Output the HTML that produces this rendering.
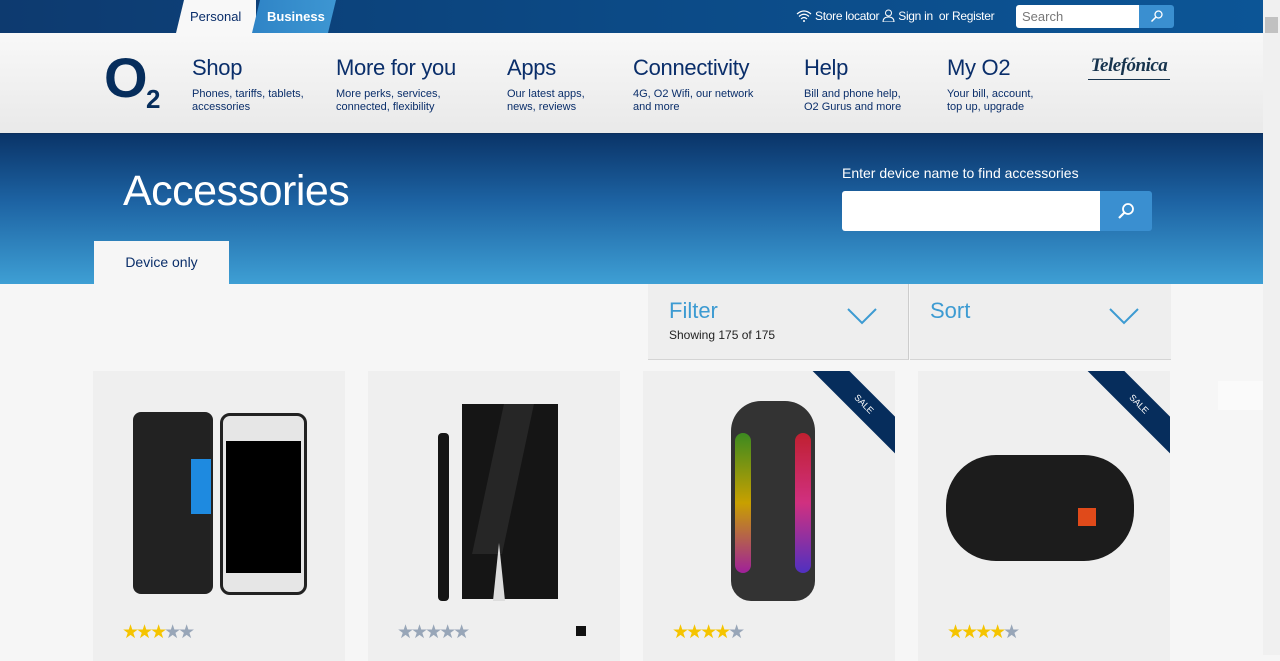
<!DOCTYPE html>
<html><head><meta charset="utf-8"><style>
*{margin:0;padding:0;box-sizing:border-box}
body{width:1280px;height:655px;overflow:hidden;background:#f6f6f6;font-family:"Liberation Sans",sans-serif;position:relative}
.a{position:absolute}
.top{left:0;top:0;width:1263px;height:33px;background:linear-gradient(90deg,#0d3a6f,#0c4a86 50%,#0c5596)}
.nav{left:0;top:33px;width:1263px;height:101px;background:linear-gradient(#f8f8f8,#e9e9e9);border-bottom:1px solid #0c2f5c}
.hero{left:0;top:134px;width:1263px;height:150px;background:linear-gradient(#0a3468,#1d63a3 45%,#3e9fd4)}
.ni h3{font-size:22px;color:#0a2e6a;font-family:"Liberation Sans",sans-serif;font-weight:normal;letter-spacing:-0.3px}
.ni p{font-size:11px;color:#0a2e6a;line-height:13px;margin-top:7px}
.card{top:371px;width:252px;height:290px;background:#efefef;overflow:hidden}
.st{top:621px;font-size:19px;letter-spacing:-3px}
.y{color:#f5c400}.g{color:#98a6b8}
.sale{width:150px;height:26px;background:#062d5c;transform:rotate(45deg);color:#fff;font-size:9px;text-align:center;line-height:26px}
</style></head><body>
<div class="a top"></div>
<div class="a" style="left:176px;top:0;width:80px;height:33px;background:#f8f8f8;clip-path:polygon(8px 0,100% 0,100% 100%,0 100%)"></div>
<div class="a" style="left:190px;top:9px;font-size:13px;color:#0a2e6a">Personal</div>
<div class="a" style="left:252px;top:0;width:84px;height:33px;background:linear-gradient(90deg,#2f84c6,#3d96d2);clip-path:polygon(8px 0,100% 0,calc(100% - 8px) 100%,0 100%)"></div>
<div class="a" style="left:267px;top:9px;font-size:13px;color:#fff;font-weight:bold">Business</div>
<div class="a" style="left:796px;top:9px;font-size:12px;color:#fff;white-space:nowrap;letter-spacing:-0.3px">
<svg width="16" height="12" viewBox="0 0 16 12" style="vertical-align:-2px"><path d="M1 4Q8-2 15 4M3 6.5Q8 2 13 6.5M5 9Q8 6 11 9" stroke="#fff" fill="none" stroke-width="1.2"/><circle cx="8" cy="11" r="1" fill="#fff"/></svg> Store locator
<svg width="13" height="13" viewBox="0 0 13 13" style="vertical-align:-2px"><circle cx="6.5" cy="4" r="3" stroke="#fff" fill="none"/><path d="M1 13Q1 8 6.5 8Q12 8 12 13Z" stroke="#fff" fill="none"/></svg> Sign in &nbsp;or Register</div>
<div class="a" style="left:1016px;top:5px;width:123px;height:23px;background:#fff;border-radius:3px 0 0 3px;font-size:13px;color:#777;padding:4px 6px">Search</div>
<div class="a" style="left:1139px;top:5px;width:35px;height:23px;background:#3a8fd0;border-radius:0 3px 3px 0"><svg width="35" height="23"><circle cx="19.5" cy="9.5" r="3.5" stroke="#fff" fill="none" stroke-width="1.3"/><path d="M17 12L12.5 16.5" stroke="#fff" stroke-width="1.5"/></svg></div>
<div class="a nav"></div>
<div class="a" style="left:104px;top:50px;font-size:56px;font-weight:bold;color:#062d5c;line-height:56px;letter-spacing:-2px">O</div>
<div class="a" style="left:146px;top:84px;font-size:26px;font-weight:bold;color:#062d5c">2</div>
<div class="a ni" style="left:192px;top:55px"><h3>Shop</h3><p>Phones, tariffs, tablets,<br>accessories</p></div>
<div class="a ni" style="left:336px;top:55px"><h3>More for you</h3><p>More perks, services,<br>connected, flexibility</p></div>
<div class="a ni" style="left:507px;top:55px"><h3>Apps</h3><p>Our latest apps,<br>news, reviews</p></div>
<div class="a ni" style="left:633px;top:55px"><h3>Connectivity</h3><p>4G, O2 Wifi, our network<br>and more</p></div>
<div class="a ni" style="left:804px;top:55px"><h3>Help</h3><p>Bill and phone help,<br>O2 Gurus and more</p></div>
<div class="a ni" style="left:947px;top:55px"><h3>My O2</h3><p>Your bill, account,<br>top up, upgrade</p></div>
<div class="a" style="left:1088px;top:55px;font-size:19px;font-style:italic;font-weight:bold;font-family:'Liberation Serif';color:#17344e;border-bottom:1px solid #17344e;padding-bottom:2px;width:82px;text-align:center;letter-spacing:-0.5px">Telefónica</div>
<div class="a hero"></div>
<div class="a" style="left:123px;top:167px;font-size:43px;color:#fff;font-family:'Liberation Sans';letter-spacing:-0.5px">Accessories</div>
<div class="a" style="left:842px;top:165px;font-size:14px;color:#fff">Enter device name to find accessories</div>
<div class="a" style="left:842px;top:191px;width:258px;height:40px;background:#fff;border-radius:3px 0 0 3px"></div>
<div class="a" style="left:1100px;top:191px;width:52px;height:40px;background:#3a8fd0;border-radius:0 3px 3px 0"><svg width="52" height="40"><circle cx="28" cy="18" r="5" stroke="#fff" fill="none" stroke-width="1.8"/><path d="M24.5 21.5L19 27" stroke="#fff" stroke-width="2.2"/></svg></div>
<div class="a" style="left:94px;top:241px;width:135px;height:43px;background:#f6f6f6;font-size:14px;color:#0a2e6a;text-align:center;line-height:43px">Device only</div>
<div class="a" style="left:648px;top:284px;width:261px;height:76px;background:#eee;border-bottom:1px solid #d4d4d4;border-right:1px solid #ccc"></div>
<div class="a" style="left:910px;top:284px;width:261px;height:76px;background:#eee;border-bottom:1px solid #d4d4d4"></div>
<div class="a" style="left:669px;top:298px;font-size:22px;color:#3d9bd2">Filter</div>
<div class="a" style="left:669px;top:328px;font-size:12px;color:#222">Showing 175 of 175</div>
<div class="a" style="left:930px;top:298px;font-size:22px;color:#3d9bd2">Sort</div>
<svg class="a" style="left:846px;top:306px" width="32" height="20"><path d="M2 3L16 17L30 3" stroke="#3d9bd2" fill="none" stroke-width="2"/></svg>
<svg class="a" style="left:1108px;top:306px" width="32" height="20"><path d="M2 3L16 17L30 3" stroke="#3d9bd2" fill="none" stroke-width="2"/></svg>
<div class="a" style="left:1218px;top:381px;width:45px;height:29px;background:#fafafa"></div>
<div class="a" style="left:1263px;top:0;width:17px;height:655px;background:#f0f0f0"></div>
<div class="a" style="left:1265px;top:17px;width:13px;height:16px;background:#c1c1c1"></div>

<div class="a card" style="left:93px">
<div class="a" style="left:40px;top:41px;width:80px;height:182px;background:#222;border-radius:8px"></div>
<div class="a" style="left:98px;top:88px;width:20px;height:55px;background:#1e8ae0"></div>
<div class="a" style="left:127px;top:42px;width:87px;height:182px;background:#e6e6e6;border:3px solid #222;border-radius:10px"></div>
<div class="a" style="left:133px;top:70px;width:75px;height:132px;background:#000"></div>
</div>
<div class="card a" style="left:368px">
<div class="a" style="left:94px;top:33px;width:96px;height:195px;background:#151515"></div>
<div class="a" style="left:70px;top:62px;width:11px;height:168px;background:#151515;border-radius:4px"></div>
<div class="a" style="left:120px;top:33px;width:30px;height:150px;background:#262626;transform:skewX(-12deg)"></div>
<div class="a" style="left:125px;top:172px;width:0;height:0;border-left:6px solid transparent;border-right:6px solid transparent;border-bottom:58px solid #ddd"></div>
</div>
<div class="card a" style="left:643px">
<div class="a" style="left:88px;top:30px;width:84px;height:200px;background:#333;border-radius:30px 30px 20px 20px"></div>
<div class="a" style="left:92px;top:62px;width:16px;height:140px;background:linear-gradient(#3c8a20,#c8a000,#a0209a);border-radius:8px"></div>
<div class="a" style="left:152px;top:62px;width:16px;height:140px;background:linear-gradient(#c02030,#d03080,#5030c0);border-radius:8px"></div>
<div class="a sale" style="left:146px;top:20px">SALE</div>
</div>
<div class="card a" style="left:918px">
<div class="a" style="left:28px;top:84px;width:188px;height:106px;background:#1c1c1c;border-radius:50px"></div>
<div class="a" style="left:160px;top:137px;width:18px;height:18px;background:#e04a1a"></div>
<div class="a sale" style="left:146px;top:20px">SALE</div>
</div>
<div class="a st" style="left:122px"><span class="y">★★★</span><span class="g">★★</span></div>
<div class="a st" style="left:397px"><span class="g">★★★★★</span></div>
<div class="a" style="left:576px;top:626px;width:10px;height:10px;background:#111"></div>
<div class="a st" style="left:672px"><span class="y">★★★★</span><span class="g">★</span></div>
<div class="a st" style="left:947px"><span class="y">★★★★</span><span class="g">★</span></div>
</body></html>
